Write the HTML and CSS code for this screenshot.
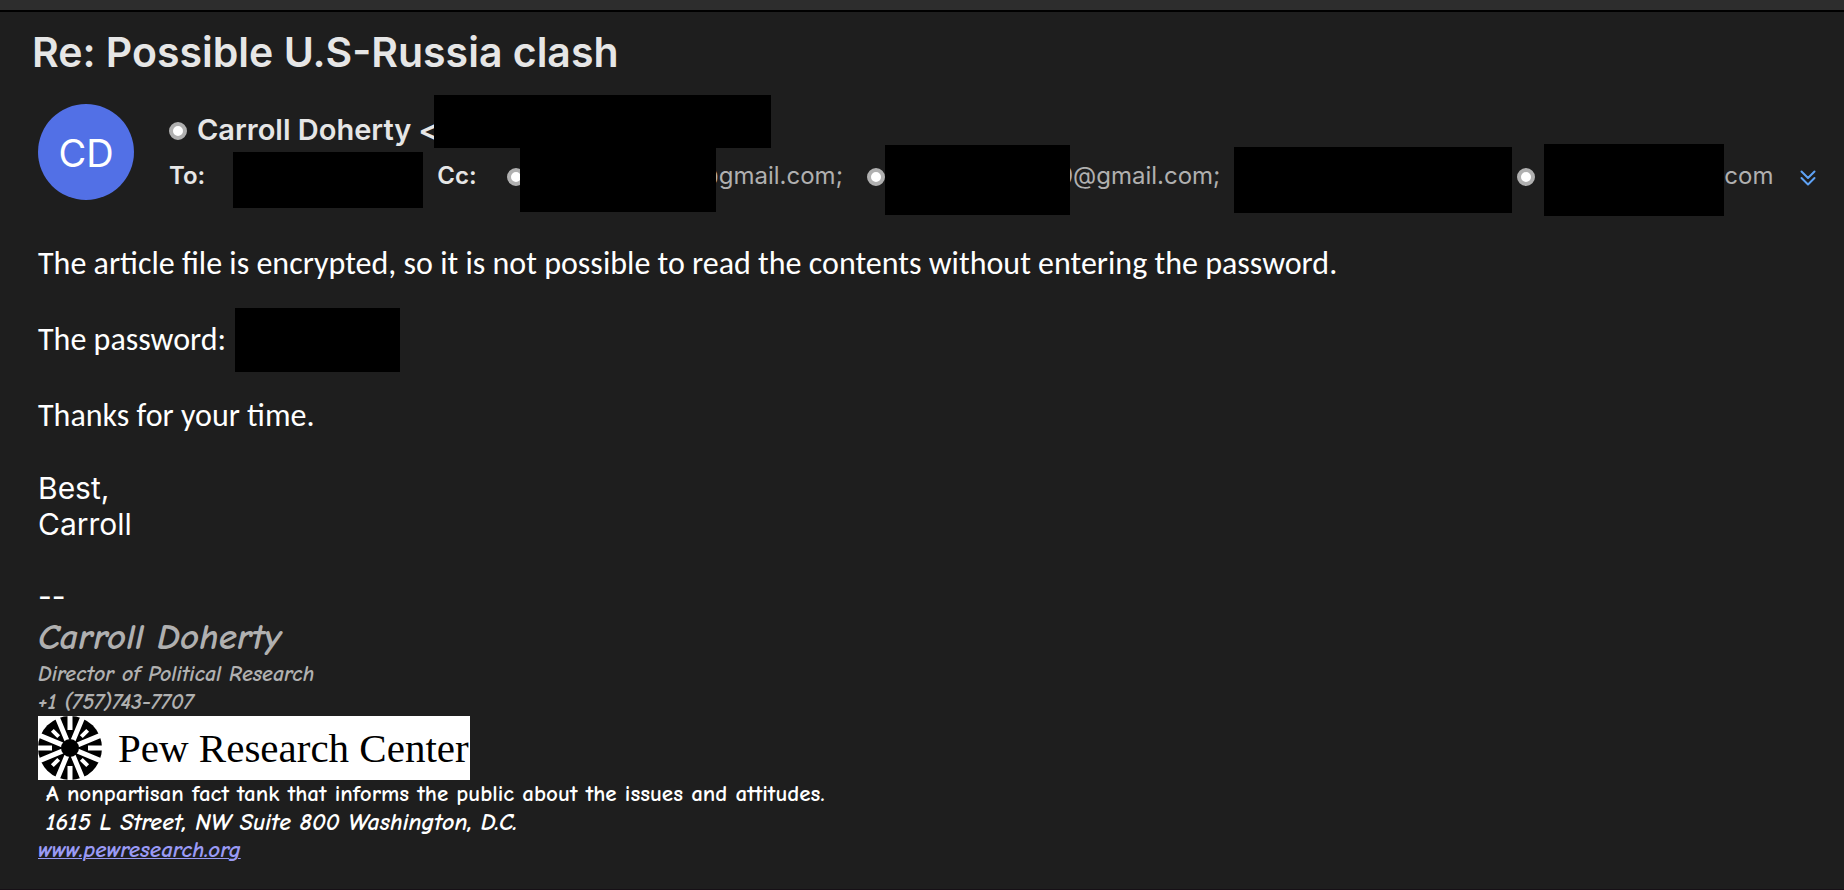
FILE: index.html
```html
<!DOCTYPE html>
<html lang="en">
<head>
    <meta charset="UTF-8">
    <meta name="viewport" content="width=device-width, initial-scale=1.0">
    <title>Re: Possible U.S-Russia clash</title>
    <link rel="stylesheet" href="styles.css">
</head>
<body>
    <div class="toolbar"></div>

    <main class="message">
        <h1 class="subject">Re: Possible U.S-Russia clash</h1>

        <!-- Sender and recipients -->
        <header class="message-header">
            <div class="avatar">CD</div>
            <div class="people">
                <div class="from">
                    <span class="presence"></span>
                    <span class="from-name">Carroll Doherty &lt;</span>
                    <span class="redacted redacted-from"></span>
                </div>
                <div class="recipients">
                    <span class="field-label">To:</span>
                    <span class="redacted redacted-to"></span>
                    <span class="field-label">Cc:</span>
                    <span class="recipient first">
                        <span class="presence"></span>
                        <span class="redacted redacted-first"></span>
                        <span class="address">@gmail.com;</span>
                    </span>
                    <span class="recipient">
                        <span class="presence"></span>
                        <span class="redacted redacted-second"></span>
                        <span class="address">0@gmail.com;</span>
                    </span>
                    <span class="redacted redacted-third"></span>
                    <span class="recipient last">
                        <span class="presence"></span>
                        <span class="redacted redacted-fourth"></span>
                        <span class="address">com</span>
                    </span>
                    <button type="button" class="btn-expand" aria-label="Show all recipients">
                        <svg width="16" height="16" viewBox="0 0 16 16" fill="none" stroke="#5ea2f5" stroke-width="2" stroke-linecap="round" stroke-linejoin="round">
                            <path d="M1.500 1.500 8 8l6.500-6.500M1.500 8 8 14.500 14.500 8"/>
                        </svg>
                    </button>
                </div>
            </div>
        </header>

        <!-- Message text -->
        <section class="message-body">
            <p>The article file is encrypted, so it is not possible to read the contents without entering the password.</p>
            <p class="password">The password: <span class="redacted redacted-password"></span></p>
            <p>Thanks for your time.</p>
        </section>
        <p class="closing">Best,<br>Carroll</p>

        <!-- Signature -->
        <footer class="signature">
            <div class="divider">--</div>
            <div class="sig-name">Carroll Doherty</div>
            <div class="sig-detail">Director of Political Research</div>
            <div class="sig-detail">+1 (757)743-7707</div>
            <div class="logo">
                <svg width="64" height="64" viewBox="-32 -32 64 64">
                    <circle r="32" fill="#000"/>
                    <!-- long spokes -->
                    <g stroke="#fff" stroke-width="5">
                        <path d="M0-33V-7M0 7V33M-33 0H-7M7 0H33" transform="rotate(22.5)"/>
                        <path d="M0-33V-7M0 7V33M-33 0H-7M7 0H33" transform="rotate(67.5)"/>
                    </g>
                    <!-- short spokes -->
                    <path d="M0-18V-33M0 18V33M-18 0H-33M18 0H33" stroke="#fff" stroke-width="5"/>
                    <path d="M0-16V-25M0 16V25M-16 0H-25M16 0H25" stroke="#fff" stroke-width="4" transform="rotate(45)"/>
                    <circle r="9" fill="#000"/>
                </svg>
                <span class="logo-text">Pew Research Center</span>
            </div>
            <div class="sig-line">A nonpartisan fact tank that informs the public about the issues and attitudes.</div>
            <div class="sig-line sig-address">1615 L Street, NW Suite 800 Washington, D.C.</div>
            <a class="sig-link" href="http://www.pewresearch.org">www.pewresearch.org</a>
        </footer>
    </main>
</body>
</html>
```
FILE: styles.css
```css
* {
    box-sizing: border-box;
}

body {
    margin: 0;
    min-height: 100vh;
    display: flex;
    flex-direction: column;
    font-family: Inter, "Liberation Sans", sans-serif;
    background-color: #1e1e1e;
    color: #ffffff;
}

.toolbar {
    height: 12px;
    background-color: #2d2d2d;
    border-bottom: 2px solid #000000;
}

.message {
    flex: 1;
    padding: 16px 24px 0 38px;
    border-bottom: 1px solid #161016;
}

.subject {
    margin: 0 0 0 -6px;
    font-size: 41px;
    line-height: 48px;
    font-weight: 600;
    color: #e6e6e6;
}

/* Header */
.message-header {
    display: flex;
    gap: 35px;
    margin-top: 19px;
}

.avatar {
    flex: none;
    width: 96px;
    height: 96px;
    margin-top: 9px;
    border-radius: 50%;
    background-color: #5270e6;
    font-size: 38px;
    line-height: 98px;
    text-align: center;
}

.people {
    flex: 1;
    min-width: 0;
}

.from,
.recipients,
.recipient {
    display: flex;
    align-items: center;
}

.from {
    align-items: flex-end;
    height: 53px;
}

.presence {
    flex: none;
    width: 18px;
    height: 18px;
    margin-bottom: 6px;
    border: 4px solid #b0b0b0;
    border-radius: 50%;
    background-color: #ffffff;
}

.from .presence {
    margin-bottom: 8px;
}

.from-name {
    margin-left: 10px;
    font-size: 29px;
    line-height: 36px;
    font-weight: 600;
    color: #e6e6e6;
    white-space: nowrap;
}

.redacted {
    flex: none;
    position: relative;
    background-color: #000000;
}

.redacted-from {
    width: 337px;
    height: 53px;
    margin-left: -4px;
}

.recipients {
    height: 63px;
}

.field-label,
.address {
    flex: none;
    padding-bottom: 8px;
    font-size: 24px;
    line-height: 32px;
    color: #b0b0b0;
}

.field-label {
    font-weight: 600;
    color: #e6e6e6;
}

.redacted-to {
    width: 190px;
    height: 56px;
    margin: 0 14px 0 28px;
}

.recipient {
    flex: none;
    margin-left: 24px;
}

.recipient.first {
    margin-left: 30px;
}

.recipient.last {
    margin-left: 5px;
}

.redacted-first {
    width: 196px;
    height: 64px;
    margin: 0 -20px 0 -5px;
}

.redacted-second {
    width: 185px;
    height: 70px;
    margin-right: -12px;
}

.redacted-third {
    width: 278px;
    height: 66px;
    margin-left: 14px;
}

.redacted-fourth {
    width: 180px;
    height: 72px;
    margin-left: 9px;
}

.btn-expand {
    display: flex;
    margin-left: auto;
    padding: 4px 4px 8px;
    border: none;
    background: none;
    cursor: pointer;
}

/* Body */
.message-body {
    margin-top: 34px;
    font-family: Carlito, Lato, sans-serif;
    font-size: 32px;
    line-height: 38px;
}

.message-body p {
    margin: 0 0 38px;
}

.message-body p:last-child {
    margin-bottom: 35px;
}

.password {
    display: flex;
    align-items: center;
    height: 38px;
}

.redacted-password {
    width: 165px;
    height: 64px;
    margin-left: 9px;
}

.closing {
    margin: 0;
    font-size: 30px;
    line-height: 36px;
}

/* Signature */
.signature {
    margin-top: 36px;
    font-family: "Comic Sans MS", "Comic Neue", "Open Sans", sans-serif;
    font-size: 23px;
    line-height: 28px;
}

.divider {
    font-family: Inter, sans-serif;
    font-size: 30px;
    line-height: 36px;
}

.sig-name {
    font-size: 37px;
    line-height: 46px;
    font-weight: bold;
    font-style: italic;
    color: #b0b0b0;
}

.sig-detail {
    font-size: 22px;
    font-weight: bold;
    font-style: italic;
    color: #b0b0b0;
}

.logo {
    display: flex;
    align-items: center;
    gap: 16px;
    width: 432px;
    height: 64px;
    background-color: #ffffff;
    color: #000000;
}

.logo-text {
    font-family: "Liberation Serif", serif;
    font-size: 41px;
    line-height: 64px;
    white-space: nowrap;
}

.sig-line {
    padding-left: 8px;
    font-weight: bold;
}

.sig-address {
    font-size: 24px;
    font-style: italic;
}

.sig-link {
    font-weight: bold;
    font-style: italic;
    color: #9a9af5;
    text-decoration-thickness: 1px;
}
```
